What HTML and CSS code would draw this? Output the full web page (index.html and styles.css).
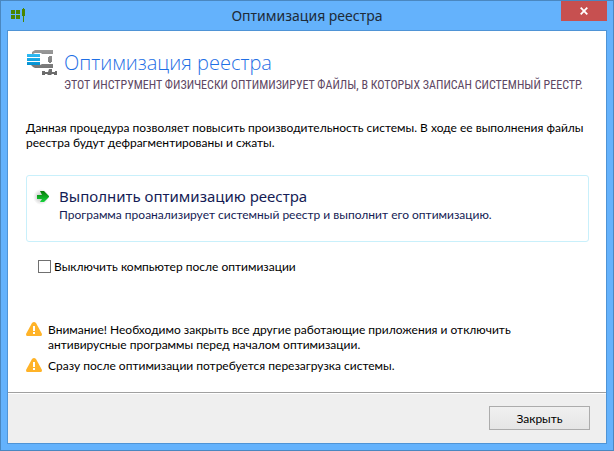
FILE: index.html
```html
<!DOCTYPE html>
<html lang="ru">
<head>
<meta charset="utf-8">
<title>Оптимизация реестра</title>
<link rel="stylesheet" href="styles.css">
</head>
<body>
<div class="window">
  <header class="titlebar">
    <svg class="app-icon" width="16" height="16" viewBox="0 0 16 16" fill="#4b8500" aria-hidden="true">
      <path d="M1 3h4v4H1zM6 3h4v4H6zM1 8h4v4H1zM6 8h4v4H6zM12 2h1V1h1v1h1v7h-1v6h-1V9h-1z"/>
    </svg>
    <h1 class="window-title">Оптимизация реестра</h1>
    <button class="window-close" type="button" aria-label="Закрыть окно">
      <svg width="8" height="8" viewBox="0 0 8 8" aria-hidden="true"><path d="M.7 .7l6.600 6.600M7.300 .7L.7 7.300" stroke="#fff" stroke-width="1.800"/></svg>
    </button>
  </header>
  <main class="client">
    <div class="content">
      <div class="heading">
        <svg class="clamp" width="32" height="28" viewBox="0 0 32 28" aria-hidden="true">
          <defs>
            <linearGradient id="steel" x1="0" y1="0" x2="0" y2="1"><stop offset="0" stop-color="#999"/><stop offset="1" stop-color="#686868"/></linearGradient>
            <linearGradient id="sheets" x1="0" y1="0" x2="0" y2="1"><stop offset="0" stop-color="#32bdf6"/><stop offset="1" stop-color="#008fd0"/></linearGradient>
          </defs>
          <path fill="url(#steel)" d="M9 1h18v4H16l-1-1H9L7 5H6V3zM23 7h3v6h-1v1h-2v-1h-1V8h1zM16 15h11v4H9l-2-1-2-2h9zM23 20h3v3h3v-1h2v4h-3v-1h-2l-1 1h-3l-1-1h-2v1h-3v-4h3v1h3z"/>
          <path fill="url(#sheets)" d="M1 5h13v3H1zM1 9h13v3H1zM1 13h13v3H1z"/>
        </svg>
        <div class="heading-text">
          <h2 class="heading-title">Оптимизация реестра</h2>
          <p class="heading-sub">ЭТОТ ИНСТРУМЕНТ ФИЗИЧЕСКИ ОПТИМИЗИРУЕТ ФАЙЛЫ, В КОТОРЫХ ЗАПИСАН СИСТЕМНЫЙ РЕЕСТР.</p>
        </div>
      </div>
      <p class="intro">Данная процедура позволяет повысить производительность системы. В ходе ее выполнения файлы реестра будут дефрагментированы и сжаты.</p>
      <button class="command" type="button">
        <svg class="arrow" width="18" height="16" viewBox="0 0 18 16" aria-hidden="true">
          <defs>
            <linearGradient id="go" x1="0" y1="0" x2="0" y2="1"><stop offset="0" stop-color="#067a06"/><stop offset="1" stop-color="#16d43c"/></linearGradient>
            <radialGradient id="glow"><stop offset=".4" stop-color="#d4d4d4"/><stop offset="1" stop-color="#fff"/></radialGradient>
          </defs>
          <circle cx="8" cy="8" r="8" fill="url(#glow)"/>
          <path fill="url(#go)" d="M4 6h5L7 2h4l5 5v1l-5 5H7l2-3H4z"/>
        </svg>
        <span class="command-text">
          <span class="command-title">Выполнить оптимизацию реестра</span>
          <span class="command-note">Программа проанализирует системный реестр и выполнит его оптимизацию.</span>
        </span>
      </button>
      <label class="option"><input class="tick" type="checkbox">Выключить компьютер после оптимизации</label>
      <ul class="warnings">
        <li class="warning">
          <svg class="sign" width="16" height="14" viewBox="0 0 16 14" aria-hidden="true"><path fill="#ffb328" d="M8 0q1 0 2 1L16 12q0 2-1 2H1Q0 14 0 12L6 1Q7 0 8 0z"/><path fill="#fff" d="M7 4h2v5H7zM7 10h2v2H7z"/></svg>
          <p class="warning-text">Внимание! Необходимо закрыть все другие работающие приложения и отключить антивирусные программы перед началом оптимизации.</p>
        </li>
        <li class="warning">
          <svg class="sign" width="16" height="14" viewBox="0 0 16 14" aria-hidden="true"><path fill="#ffb328" d="M8 0q1 0 2 1L16 12q0 2-1 2H1Q0 14 0 12L6 1Q7 0 8 0z"/><path fill="#fff" d="M7 4h2v5H7zM7 10h2v2H7z"/></svg>
          <p class="warning-text">Сразу после оптимизации потребуется перезагрузка системы.</p>
        </li>
      </ul>
    </div>
    <footer class="footer"><button class="close" type="button">Закрыть</button></footer>
  </main>
</div>
</body>
</html>
```

FILE: styles.css
```css
* { box-sizing: border-box; }
body, h1, h2, p, ul { margin: 0; padding: 0; }
body { font: 12px/15px Lato, "Noto Sans", sans-serif; color: #000; }
button { font: inherit; color: inherit; margin: 0; padding: 0; }

.window {
  display: flex;
  flex-direction: column;
  min-height: 100vh;
  padding: 0 6px 6px;
  background: #64b2fc;
  border: 1px solid #4a87c0;
}
.titlebar {
  display: grid;
  grid-template-columns: 46px 1fr 46px;
  align-items: start;
  height: 29px;
}
.app-icon { margin: 6px 0 0 3px; }
.window-title {
  font-family: "Noto Sans", sans-serif;
  font-size: 14px;
  line-height: 30px;
  font-weight: 400;
  text-align: center;
  color: #1e2b38;
}
.window-close {
  display: grid;
  place-items: center;
  height: 20px;
  border: 0;
  background: #c75050;
}

.client {
  flex: 1;
  display: flex;
  flex-direction: column;
  background: #fff;
  border: 1px solid #4f94d6;
}
.content { flex: 1; padding: 18px 17px 18px 18px; }

.heading { display: flex; gap: 6px; }
.clamp { flex: none; }
.heading-title {
  font-family: "Open Sans", "Noto Sans", sans-serif;
  font-size: 20px;
  line-height: 28px;
  font-weight: 300;
  color: #1f6fe5;
}
.heading-sub {
  font: 12px/16px "Roboto Condensed", "Liberation Sans Narrow", sans-serif;
  color: #5e4763;
  white-space: nowrap;
}
.intro { margin-top: 27px; }

.command {
  display: flex;
  gap: 8px;
  width: 100%;
  min-height: 67px;
  margin-top: 25px;
  padding: 9px 6px;
  align-items: flex-start;
  text-align: left;
  background: #fff;
  border: 1px solid #c9f0fb;
  border-radius: 3px;
  color: #151c55;
}
.arrow { margin-top: 4px; }
.command-title, .command-note { display: block; }
.command-title {
  font-family: "Noto Sans", sans-serif;
  font-size: 15px;
  line-height: 22px;
}

.option {
  display: flex;
  align-items: center;
  gap: 3px;
  margin: 17px 0 0 12px;
}
.tick {
  appearance: none;
  width: 13px;
  height: 13px;
  margin: 0;
  border: 1px solid #707070;
  background: #fff;
}
.tick:checked { background: #707070; }

.warnings { margin-top: 48px; list-style: none; }
.warning { display: flex; gap: 6px; }
.warning + .warning { margin-top: 6px; }
.sign { flex: none; }

.footer {
  display: flex;
  justify-content: flex-end;
  padding: 13px 16px 13px;
  background: #efefef;
  border-top: 1px solid #a0a0a0;
  box-shadow: inset 0 1px #fff;
}
.close {
  width: 101px;
  height: 24px;
  background: linear-gradient(#f0f0f0, #e5e5e5);
  border: 1px solid #acacac;
}
```
